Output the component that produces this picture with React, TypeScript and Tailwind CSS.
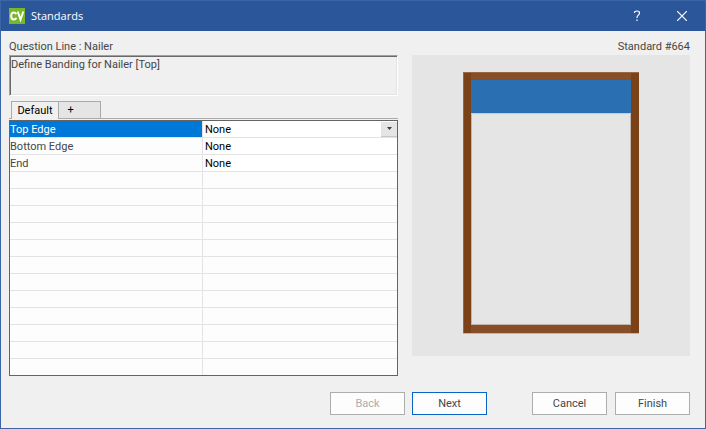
import { useState } from "react";

const edges = ["Top Edge", "Bottom Edge", "End"];
const blankRows = Array.from({ length: 12 }, (_, i) => i);

function TitleBar() {
  return (
    <header className="flex h-[30px] items-center bg-[#2b579a] pl-2 text-white">
      <svg className="h-4 w-4" viewBox="0 0 16 16" role="img" aria-label="CV">
        <rect width="16" height="16" fill="#76b82a" />
        <path d="M7.2 6.2C6.9 5 6 4.400 4.900 4.400C3.200 4.400 2.200 5.800 2.200 8S3.200 11.600 4.900 11.600C6 11.600 6.900 11 7.200 9.800" fill="none" stroke="#fff" strokeWidth="2" />
        <path d="M8.700 3.500L11.500 11.500L14.300 3.500" fill="none" stroke="#fff" strokeWidth="2" />
      </svg>
      <h1 className="ml-[6px] flex-1 font-['Open_Sans',sans-serif] leading-4">Standards</h1>
      <button type="button" aria-label="Help" className="flex h-full w-[45px] items-center justify-center">
        <svg className="h-3 w-2" viewBox="0 0 8 12" fill="none" stroke="#fff" strokeWidth="1.200">
          <path d="M1.500 3V2.500C1.500 1.500 2.500 1 4 1S6.500 1.700 6.500 3C6.500 5 4 5.200 4 7.500V8" />
          <path d="M4 9.500V11" />
        </svg>
      </button>
      <button type="button" aria-label="Close" className="flex h-full w-[46px] items-center justify-center">
        <svg className="h-[10px] w-[10px]" viewBox="0 0 10 10" stroke="#fff" strokeWidth="1.200">
          <path d="M0 0L10 10M10 0L0 10" />
        </svg>
      </button>
    </header>
  );
}

function BandingSelect({ label, showArrow }: { label: string; showArrow: boolean }) {
  const [value, setValue] = useState("None");
  return (
    <div className="flex h-4 items-center">
      <select
        aria-label={label}
        value={value}
        onChange={(e) => setValue(e.target.value)}
        className="h-4 min-w-0 flex-1 appearance-none bg-transparent pt-px pl-[2px] leading-[15px] text-black outline-none"
      >
        <option>None</option>
      </select>
      {showArrow && (
        <span className="pointer-events-none flex h-[15px] w-4 items-center justify-center border-b border-[#c8c8c8] bg-[#e5e5e5]">
          <svg className="h-[3px] w-[5px]" viewBox="0 0 5 3">
            <path d="M0 0H5L2.500 3Z" fill="#404040" />
          </svg>
        </span>
      )}
    </div>
  );
}

function BandingTable() {
  return (
    <table className="mt-px w-full table-fixed border-separate border-spacing-0 border border-[#646464] bg-[#fdfdfd]">
      <colgroup>
        <col className="w-[193px]" />
        <col />
      </colgroup>
      <tbody>
        {edges.map((edge, i) => (
          <tr key={edge} className="h-[17px]">
            <th
              scope="row"
              className={
                "border-r border-b border-[#e3e3e3] p-0 pt-px text-left font-normal leading-[15px] " +
                (i === 0 ? "bg-[#0078d7] text-white" : "text-[#464646]")
              }
            >
              {edge}
            </th>
            <td className="border-b border-[#e3e3e3] bg-white p-0">
              <BandingSelect label={edge} showArrow={i === 0} />
            </td>
          </tr>
        ))}
        {blankRows.map((row) => (
          <tr key={row} className="group h-[17px] last:h-4">
            <td className="border-r border-b border-[#e3e3e3] p-0 group-last:border-b-0" />
            <td className="border-b border-[#e3e3e3] p-0 group-last:border-b-0" />
          </tr>
        ))}
      </tbody>
    </table>
  );
}

function Preview() {
  return (
    <div className="flex h-[301px] items-start justify-center bg-[#e5e5e5] pt-[17px]">
      <svg className="h-[262px] w-[176px]" viewBox="0 0 176 262" shapeRendering="crispEdges" role="img" aria-label="Cabinet front with top nailer">
        <rect x="7" y="7" width="162" height="247" fill="#c2b5ac" />
        <rect x="9" y="9" width="158" height="243" fill="#e5e5e5" />
        <rect x="8" width="160" height="8" fill="#884e28" />
        <rect x="8" y="8" width="160" height="33" fill="#2a6fb2" />
        <rect x="8" y="41" width="160" height="1" fill="#c8cbce" />
        <rect x="8" y="253" width="160" height="8" fill="#884e28" />
        <rect width="8" height="261" fill="#7b4218" />
        <rect x="168" width="8" height="261" fill="#7b4218" />
        <path d="M0 0H176V1H0ZM0 0H1V261H0Z" fill="#9a6744" />
        <rect y="261" width="176" height="1" fill="#c9b5a7" />
      </svg>
    </div>
  );
}

const buttonClass = "h-[23px] w-[75px] border bg-[#fdfdfd] pt-px leading-4";

export default function App() {
  return (
    <div className="flex min-h-screen flex-col border border-[#3a66a7] bg-[#f0f0f0] font-['Roboto',sans-serif] text-[11px] leading-4 text-[#464646]">
      <TitleBar />
      <main className="flex flex-1 flex-col pt-2 pr-[15px] pl-2">
        <div className="flex gap-[14px]">
          <section className="min-w-0 flex-[389]">
            <label htmlFor="question" className="block">Question Line : Nailer</label>
            <textarea
              id="question"
              readOnly
              defaultValue="Define Banding for Nailer [Top]"
              className="block h-[41px] w-full resize-none border border-t-[#a0a0a0] border-r-white border-b-white border-l-[#a0a0a0] bg-[#f0f0f0] px-px pt-px leading-4 shadow-[inset_1px_1px_0_#696969,inset_-1px_-1px_0_#e3e3e3] outline-none"
            />
            <div role="tablist" className="mt-[5px] flex h-[18px] border-b border-[#aaaaaa] pl-[2px] text-black">
              <button type="button" role="tab" aria-selected="true" className="h-[18px] w-[47px] border-t border-l border-[#aaaaaa] bg-[#f0f0f0]">Default</button>
              <button type="button" role="tab" aria-selected="false" aria-label="Add tab" className="h-[17px] w-[43px] border-x border-t border-[#aaaaaa] bg-[#e5e5e5] pr-[18px] leading-4">+</button>
            </div>
            <BandingTable />
          </section>
          <section className="min-w-0 flex-[278]">
            <p className="text-right">Standard #664</p>
            <Preview />
          </section>
        </div>
        <footer className="flex justify-end pt-4 pb-[13px]">
          <button type="button" disabled className={buttonClass + " border-[#adadad] text-[#adadad]"}>Back</button>
          <button type="button" className={buttonClass + " ml-[7px] border-[#0a64c8]"}>Next</button>
          <button type="button" className={buttonClass + " ml-[45px] border-[#adadad]"}>Cancel</button>
          <button type="button" className={buttonClass + " ml-2 border-[#adadad]"}>Finish</button>
        </footer>
      </main>
    </div>
  );
}
